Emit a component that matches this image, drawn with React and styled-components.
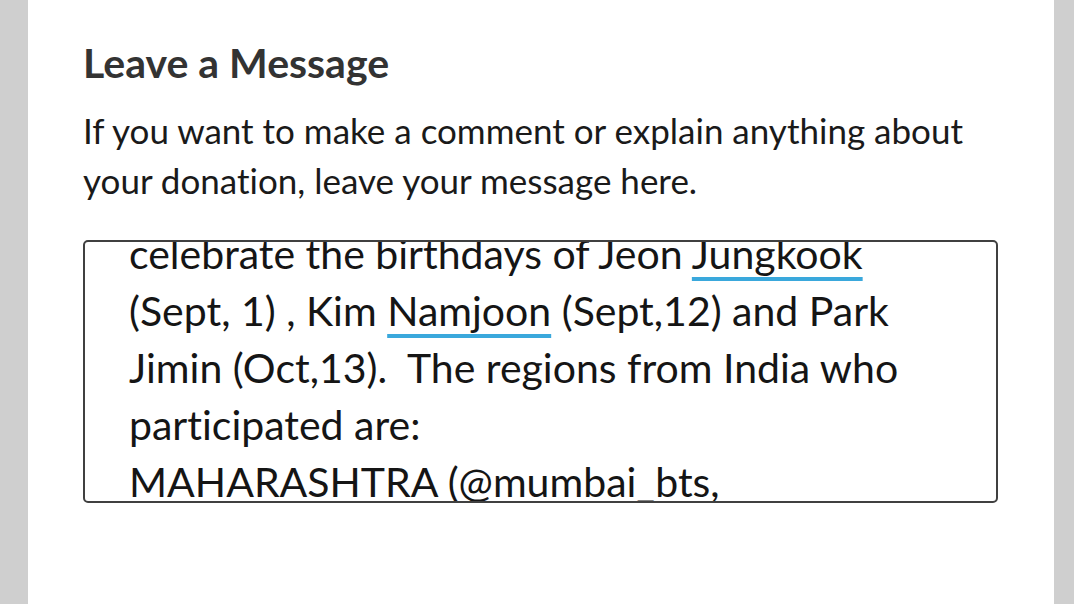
import React, { useEffect, useRef } from "react";
import styled, { createGlobalStyle } from "styled-components";

const Global = createGlobalStyle`
  html, body { margin: 0; padding: 0; background: #cfcfcf; }
  body {
    font-family: Lato, "Open Sans", sans-serif;
    font-variant-ligatures: none;
  }
`;

const Page = styled.div`
  display: flex;
  justify-content: flex-start;
  height: 604px;
  overflow: hidden;
`;

const Panel = styled.section`
  margin-left: 28px;
  width: 1026px;
  box-sizing: border-box;
  background: #ffffff;
  padding: 37px 56px 0 55px;
  display: flex;
  flex-direction: column;
`;

const Heading = styled.h2`
  margin: 0;
  font-family: Lato, sans-serif;
  font-weight: 700;
  font-size: 41px;
  line-height: 52px;
  color: #333333;
`;

const Intro = styled.p`
  margin: 16px 0 0;
  font-family: Lato, sans-serif;
  font-size: 35px;
  line-height: 50px;
  color: #1a1a1a;
`;

const MessageBox = styled.div`
  margin-top: 35px;
  height: 263px;
  box-sizing: border-box;
  border: 2px solid #404040;
  border-radius: 5px;
  padding: 0 40px 0 44px;
  overflow: hidden;
  font-family: Lato, sans-serif;
  font-size: 41px;
  line-height: 57px;
  color: #151515;
`;

const Line = styled.div`
  white-space: nowrap;
`;

const Flag = styled.span`
  text-decoration: underline;
  text-decoration-color: #3aa8dc;
  text-decoration-thickness: 4px;
  text-underline-offset: 8px;
  text-decoration-skip-ink: none;
`;

export default function App() {
  const boxRef = useRef(null);
  useEffect(() => {
    if (boxRef.current) boxRef.current.scrollTop = 57 + 17;
  }, []);
  return (
    <>
      <Global />
      <Page>
        <Panel>
          <Heading>Leave a Message</Heading>
          <Intro>
            If you want to make a comment or explain anything about
            <br />
            your donation, leave your message here.
          </Intro>
          <MessageBox ref={boxRef}>
            <Line>Fanbases from all over India came together to</Line>
            <Line>
              celebrate the birthdays of Jeon <Flag>Jungkook</Flag>
            </Line>
            <Line>
              (Sept, 1) , Kim <Flag>Namjoon</Flag> (Sept,12) and Park
            </Line>
            <Line>Jimin (Oct,13).&nbsp; The regions from India who</Line>
            <Line>participated are:</Line>
            <Line>MAHARASHTRA (@mumbai_bts,</Line>
            <Line>@pune_bts)</Line>
          </MessageBox>
        </Panel>
      </Page>
    </>
  );
}
